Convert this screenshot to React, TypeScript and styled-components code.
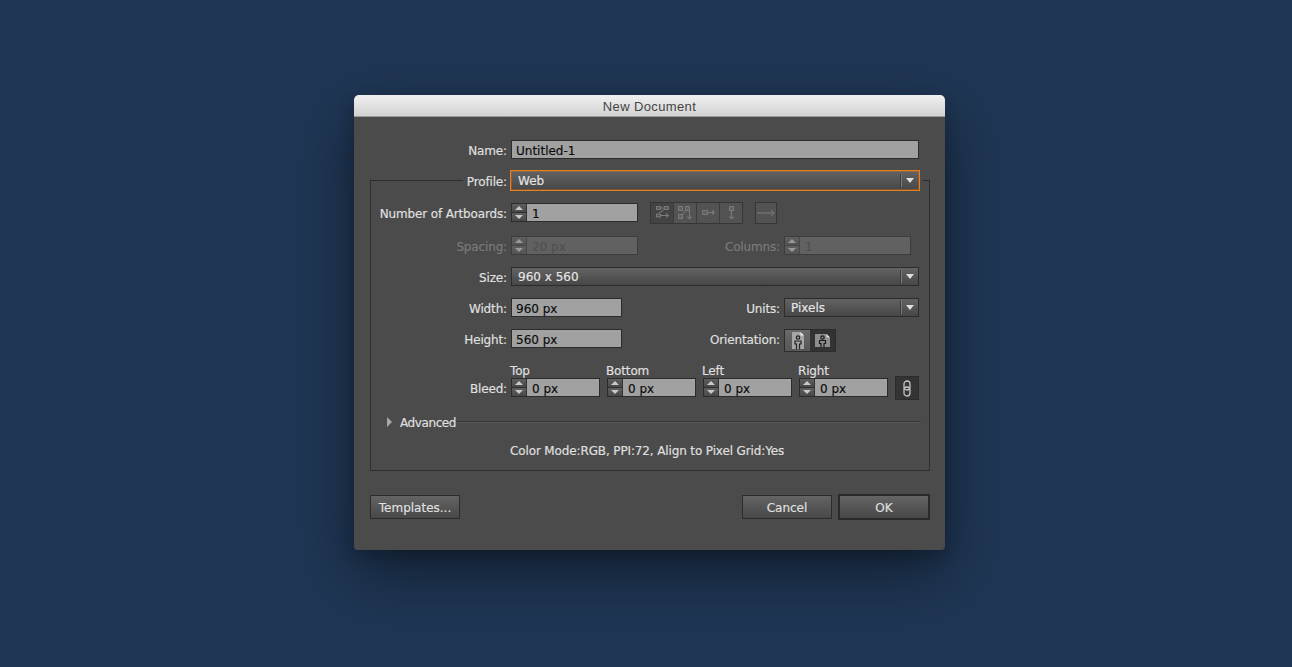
import styled, { createGlobalStyle } from "styled-components";

const GlobalStyle = createGlobalStyle`
  html, body {
    margin: 0;
    height: 100%;
    background: #1f3654;
  }
`;

const Page = styled.div`
  width: 1292px;
  height: 667px;
  overflow: hidden;
  box-sizing: border-box;
  padding: 95px 0 0 354px;
  background: #1f3654;
  font-family: "DejaVu Sans", sans-serif;
  font-size: 12px;
  color: #e0e0e0;
  -webkit-text-stroke: 0.15px;
`;

const Dialog = styled.div`
  width: 591px;
  height: 455px;
  border-radius: 5px 5px 4px 4px;
  background: #4b4b4b;
  box-shadow: 0 24px 60px rgba(0, 0, 0, 0.42), 0 6px 16px rgba(0, 0, 0, 0.2);
`;

const TitleBar = styled.div`
  height: 21px;
  border-radius: 5px 5px 0 0;
  border-bottom: 1px solid #9a9a9a;
  background: linear-gradient(#f0f0f0, #d3d3d3);
  color: #444;
  font-family: "Liberation Sans", sans-serif;
  font-size: 13px;
  letter-spacing: 0.38px;
  line-height: 23px;
  text-align: center;
  -webkit-text-stroke: 0;
`;

const Body = styled.div`
  padding: 23px 15px 0 16px;
`;

const Row = styled.div<{ $gap?: number }>`
  display: grid;
  grid-template-columns: 136px 1fr;
  grid-template-rows: 19px;
  column-gap: 4px;
  align-items: center;
  height: 19px;
  margin-top: ${(p) => p.$gap ?? 12}px;
  padding-right: 10px;
`;

const NameRow = styled(Row)`
  grid-template-columns: 137px 1fr;
  margin-top: 0;
  padding-right: 11px;
`;

const Label = styled.label<{ $off?: boolean }>`
  padding-top: 2px;
  text-align: right;
  white-space: nowrap;
  letter-spacing: -0.15px;
  color: ${(p) => (p.$off ? "#7b7b7b" : "#e0e0e0")};
`;

const Group = styled.fieldset`
  margin: 11px 0 0;
  padding: 0 0 12px;
  min-width: 0;
  border: 1px solid #2e2e2e;
`;

const Legend = styled.legend`
  display: flex;
  align-items: center;
  box-sizing: border-box;
  width: 460px;
  height: 21px;
  margin-left: 92px;
  padding: 0 3px;
  gap: 3px;
`;

const LegendLabel = styled(Label)`
  width: 41px;
`;

const Field = styled.div<{ $w?: number; $off?: boolean }>`
  display: flex;
  align-items: center;
  box-sizing: border-box;
  width: ${(p) => (p.$w ? `${p.$w}px` : "100%")};
  height: 19px;
  border: 1px solid ${(p) => (p.$off ? "#3c3c3c" : "#2c2c2c")};
  background: ${(p) => (p.$off ? "#616161" : "#a1a1a1")};
  color: ${(p) => (p.$off ? "#505050" : "#0a0a0a")};
`;

const FieldText = styled.span`
  padding: 2px 0 0 4px;
  white-space: nowrap;
`;

const Stepper = styled.div<{ $off?: boolean }>`
  display: flex;
  flex-direction: column;
  flex: none;
  width: 14px;
  height: 17px;
  margin-right: 1px;
  border-right: 1px solid #333;
  opacity: ${(p) => (p.$off ? 0.55 : 1)};
`;

const StepHalf = styled.div<{ $down?: boolean }>`
  flex: 1;
  display: flex;
  align-items: center;
  justify-content: center;
  background: linear-gradient(#5f5f5f, #484848);
  border-top: ${(p) => (p.$down ? "1px solid #2e2e2e" : "none")};

  &::after {
    content: "";
    border-left: 4px solid transparent;
    border-right: 4px solid transparent;
    border-top: ${(p) => (p.$down ? "4px solid #c8c8c8" : "none")};
    border-bottom: ${(p) => (p.$down ? "none" : "4px solid #c8c8c8")};
  }
`;

const Select = styled.div<{ $w?: number; $focus?: boolean }>`
  display: flex;
  align-items: center;
  box-sizing: border-box;
  flex: none;
  width: ${(p) => (p.$w ? `${p.$w}px` : "100%")};
  height: ${(p) => (p.$focus ? 21 : 19)}px;
  padding: 0 ${(p) => (p.$focus ? 1 : 0)}px 0 ${(p) => (p.$focus ? 7 : 6)}px;
  border: 1px solid ${(p) => (p.$focus ? "#e9801f" : "#2c2c2c")};
  box-shadow: ${(p) => (p.$focus ? "inset 0 0 0 1px rgba(190, 105, 30, 0.45)" : "none")};
  background: linear-gradient(#636363, #474747);
  color: #e6e6e6;
`;

const SelectText = styled.span`
  flex: 1;
`;

const SelectArrow = styled.div`
  display: flex;
  align-items: center;
  justify-content: center;
  width: 17px;
  height: 13px;
  border-left: 1px solid #3c3c3c;
  box-shadow: inset 1px 0 0 #7a7a7a;

  &::after {
    content: "";
    border-left: 4px solid transparent;
    border-right: 4px solid transparent;
    border-top: 5px solid #dedede;
  }
`;

const TwoCols = styled.div`
  display: flex;
  align-items: flex-start;
  height: 19px;
`;

const SideLabel = styled(Label)<{ $w: number }>`
  width: ${(p) => p.$w}px;
  margin-right: 4px;
  line-height: 19px;
`;

const ToolGroup = styled.div<{ $w: number }>`
  display: flex;
  box-sizing: border-box;
  width: ${(p) => p.$w}px;
  height: 22px;
  margin: -1px 0 0 12px;
  border: 1px solid #363636;
`;

const ToolButton = styled.div<{ $dark?: boolean }>`
  display: flex;
  align-items: center;
  justify-content: center;
  flex: 1;
  background: ${(p) => (p.$dark ? "#444444" : "#535353")};
  border-right: 1px solid #3c3c3c;
  color: #7c7c7c;

  &:last-child {
    border-right: none;
  }
`;

const OrientGroup = styled.div`
  display: flex;
  box-sizing: border-box;
  height: 23px;
  border: 1px solid #2c2c2c;
`;

const OrientButton = styled.div<{ $on?: boolean }>`
  display: flex;
  align-items: center;
  justify-content: center;
  width: 25px;
  background: ${(p) => (p.$on ? "linear-gradient(#6a6a6a, #565656)" : "#333333")};
`;

const BleedRow = styled(Row)`
  grid-template-rows: 34px;
  height: 34px;
  margin-top: 15px;
  align-items: end;
`;

const BleedLabel = styled(Label)`
  padding-top: 0;
  line-height: 15px;
`;

const BleedFields = styled.div`
  display: flex;
  gap: 7px;
  align-items: flex-end;
`;

const BleedField = styled.div`
  display: flex;
  flex-direction: column;
  width: 89px;
`;

const BleedHead = styled.span`
  height: 15px;
  line-height: 16px;
  margin-left: -1px;
  letter-spacing: -0.15px;
`;

const LinkButton = styled.div`
  display: flex;
  align-items: center;
  justify-content: center;
  flex: none;
  width: 24px;
  height: 24px;
  margin-bottom: -3px;
  box-sizing: border-box;
  border: 1px solid #2c2c2c;
  background: #343434;
`;

const Advanced = styled.div`
  display: flex;
  align-items: center;
  height: 14px;
  margin-top: 18px;
  padding: 0 8px 0 16px;
`;

const Disclosure = styled.div`
  width: 0;
  height: 0;
  margin-right: 8px;
  border-top: 5px solid transparent;
  border-bottom: 5px solid transparent;
  border-left: 5px solid #a8a8a8;
`;

const AdvancedLabel = styled(Label)`
  letter-spacing: -0.4px;
`;

const AdvancedLine = styled.div`
  flex: 1;
  height: 1px;
  margin-top: -1px;
  background: #363636;
  box-shadow: 0 1px 0 #595959;
`;

const Info = styled.div`
  height: 14px;
  line-height: 14px;
  margin-top: 15px;
  padding-left: 139px;
  letter-spacing: -0.13px;
  white-space: nowrap;
`;

const Footer = styled.div`
  display: flex;
  align-items: center;
  height: 26px;
  margin-top: 23px;
`;

const Button = styled.button<{ $primary?: boolean }>`
  box-sizing: border-box;
  width: ${(p) => (p.$primary ? 92 : 90)}px;
  height: ${(p) => (p.$primary ? 26 : 24)}px;
  margin-left: ${(p) => (p.$primary ? 6 : 0)}px;
  padding: 2px 0 0;
  border: ${(p) => (p.$primary ? "2px solid #2a2a2a" : "1px solid #2c2c2c")};
  background: linear-gradient(#646464, #484848);
  color: #e0e0e0;
  font: inherit;
`;

const FooterSpacer = styled.div`
  flex: 1;
`;

const Spinner = ({ value, w, off }: { value: string; w: number; off?: boolean }) => (
  <Field $w={w} $off={off}>
    <Stepper $off={off}>
      <StepHalf />
      <StepHalf $down />
    </Stepper>
    <FieldText>{value}</FieldText>
  </Field>
);

const PersonTall = () => (
  <svg width="14" height="19" viewBox="0 0 14 19">
    <path d="M1 1h8.5L13 4.5V18H1z" fill="#a6a6a6" />
    <path d="M9.5 1L13 4.5H9.5z" fill="#ececec" />
    <circle cx="7" cy="6.5" r="1.7" fill="none" stroke="#202020" strokeWidth="1.2" />
    <path d="M5.5 18v-5H4v-3h6v3H8.5v5" fill="none" stroke="#202020" strokeWidth="1.2" />
  </svg>
);

const PersonWide = () => (
  <svg width="17" height="15" viewBox="0 0 17 15">
    <path d="M1 1h11.5L16 4.5V14H1z" fill="#8e8e8e" />
    <path d="M12.5 1L16 4.5h-3.5z" fill="#e0e0e0" />
    <circle cx="8.5" cy="4.5" r="1.7" fill="none" stroke="#1a1a1a" strokeWidth="1.2" />
    <path d="M7 14V10.5H5.5V7.5h6v3H10V14" fill="none" stroke="#1a1a1a" strokeWidth="1.2" />
  </svg>
);

const arrows = {
  gridRow: "M2.5 1.5h4v3h-4zM10.5 1.5h4v3h-4zM6.5 3h4M10.5 4.5L5 8M2.5 9h4v3h-4zM6.5 10.5h8M12 8l2.5 2.5L12 13",
  gridCol: "M1.5 1.5h4v4h-4zM8.5 1.5h4v4h-4zM1.5 9.5h4v4h-4zM5.5 9.5l3-4M12.5 5.5v8.5M10 11.5l2.5 2.5 2.5-2.5",
  row: "M2.5 5.5h5v4h-5zM7.5 7.5h7M12 5l2.5 2.5L12 10",
  col: "M6.5 1.5h4v4h-4zM8.5 5.5v8.5M6 11.5L8.5 14l2.5-2.5",
};

const ToolIcon = ({ d }: { d: string }) => (
  <svg width="17" height="16" viewBox="0 0 17 16" fill="rgba(120,120,120,0.35)" stroke="currentColor">
    <path d={d} />
  </svg>
);

export default function App() {
  return (
    <Page>
      <GlobalStyle />
      <Dialog>
        <TitleBar>New Document</TitleBar>
        <Body>
          <NameRow>
            <Label>Name:</Label>
            <Field>
              <FieldText>Untitled-1</FieldText>
            </Field>
          </NameRow>
          <Group>
            <Legend>
              <LegendLabel>Profile:</LegendLabel>
              <Select $focus $w={410}>
                <SelectText>Web</SelectText>
                <SelectArrow />
              </Select>
            </Legend>
            <Row>
              <Label>Number of Artboards:</Label>
              <TwoCols>
                <Spinner value="1" w={127} />
                <ToolGroup $w={93}>
                  <ToolButton $dark>
                    <ToolIcon d={arrows.gridRow} />
                  </ToolButton>
                  <ToolButton>
                    <ToolIcon d={arrows.gridCol} />
                  </ToolButton>
                  <ToolButton>
                    <ToolIcon d={arrows.row} />
                  </ToolButton>
                  <ToolButton>
                    <ToolIcon d={arrows.col} />
                  </ToolButton>
                </ToolGroup>
                <ToolGroup $w={22}>
                  <ToolButton>
                    <svg width="18" height="10" viewBox="0 0 18 10" fill="none" stroke="currentColor">
                      <path d="M0 5h17M14 2l3 3-3 3" />
                    </svg>
                  </ToolButton>
                </ToolGroup>
              </TwoCols>
            </Row>
            <Row $gap={14}>
              <Label $off>Spacing:</Label>
              <TwoCols>
                <Spinner value="20 px" w={127} off />
                <SideLabel $off $w={142}>Columns:</SideLabel>
                <Spinner value="1" w={127} off />
              </TwoCols>
            </Row>
            <Row>
              <Label>Size:</Label>
              <Select>
                <SelectText>960 x 560</SelectText>
                <SelectArrow />
              </Select>
            </Row>
            <Row>
              <Label>Width:</Label>
              <TwoCols>
                <Field $w={111}>
                  <FieldText>960 px</FieldText>
                </Field>
                <SideLabel $w={158}>Units:</SideLabel>
                <Select $w={135}>
                  <SelectText>Pixels</SelectText>
                  <SelectArrow />
                </Select>
              </TwoCols>
            </Row>
            <Row>
              <Label>Height:</Label>
              <TwoCols>
                <Field $w={111}>
                  <FieldText>560 px</FieldText>
                </Field>
                <SideLabel $w={158}>Orientation:</SideLabel>
                <OrientGroup>
                  <OrientButton $on>
                    <PersonTall />
                  </OrientButton>
                  <OrientButton>
                    <PersonWide />
                  </OrientButton>
                </OrientGroup>
              </TwoCols>
            </Row>
            <BleedRow>
              <BleedLabel>Bleed:</BleedLabel>
              <BleedFields>
                {["Top", "Bottom", "Left", "Right"].map((side) => (
                  <BleedField key={side}>
                    <BleedHead>{side}</BleedHead>
                    <Spinner value="0 px" w={89} />
                  </BleedField>
                ))}
                <LinkButton>
                  <svg width="10" height="17" viewBox="0 0 10 17" fill="none" stroke="#c4c4c4" strokeWidth="1.3">
                    <rect x="2" y="1" width="6" height="9" rx="3" />
                    <rect x="2" y="7" width="6" height="9" rx="3" />
                  </svg>
                </LinkButton>
              </BleedFields>
            </BleedRow>
            <Advanced>
              <Disclosure />
              <AdvancedLabel>Advanced</AdvancedLabel>
              <AdvancedLine />
            </Advanced>
            <Info>Color Mode:RGB, PPI:72, Align to Pixel Grid:Yes</Info>
          </Group>
          <Footer>
            <Button>Templates...</Button>
            <FooterSpacer />
            <Button>Cancel</Button>
            <Button $primary>OK</Button>
          </Footer>
        </Body>
      </Dialog>
    </Page>
  );
}
